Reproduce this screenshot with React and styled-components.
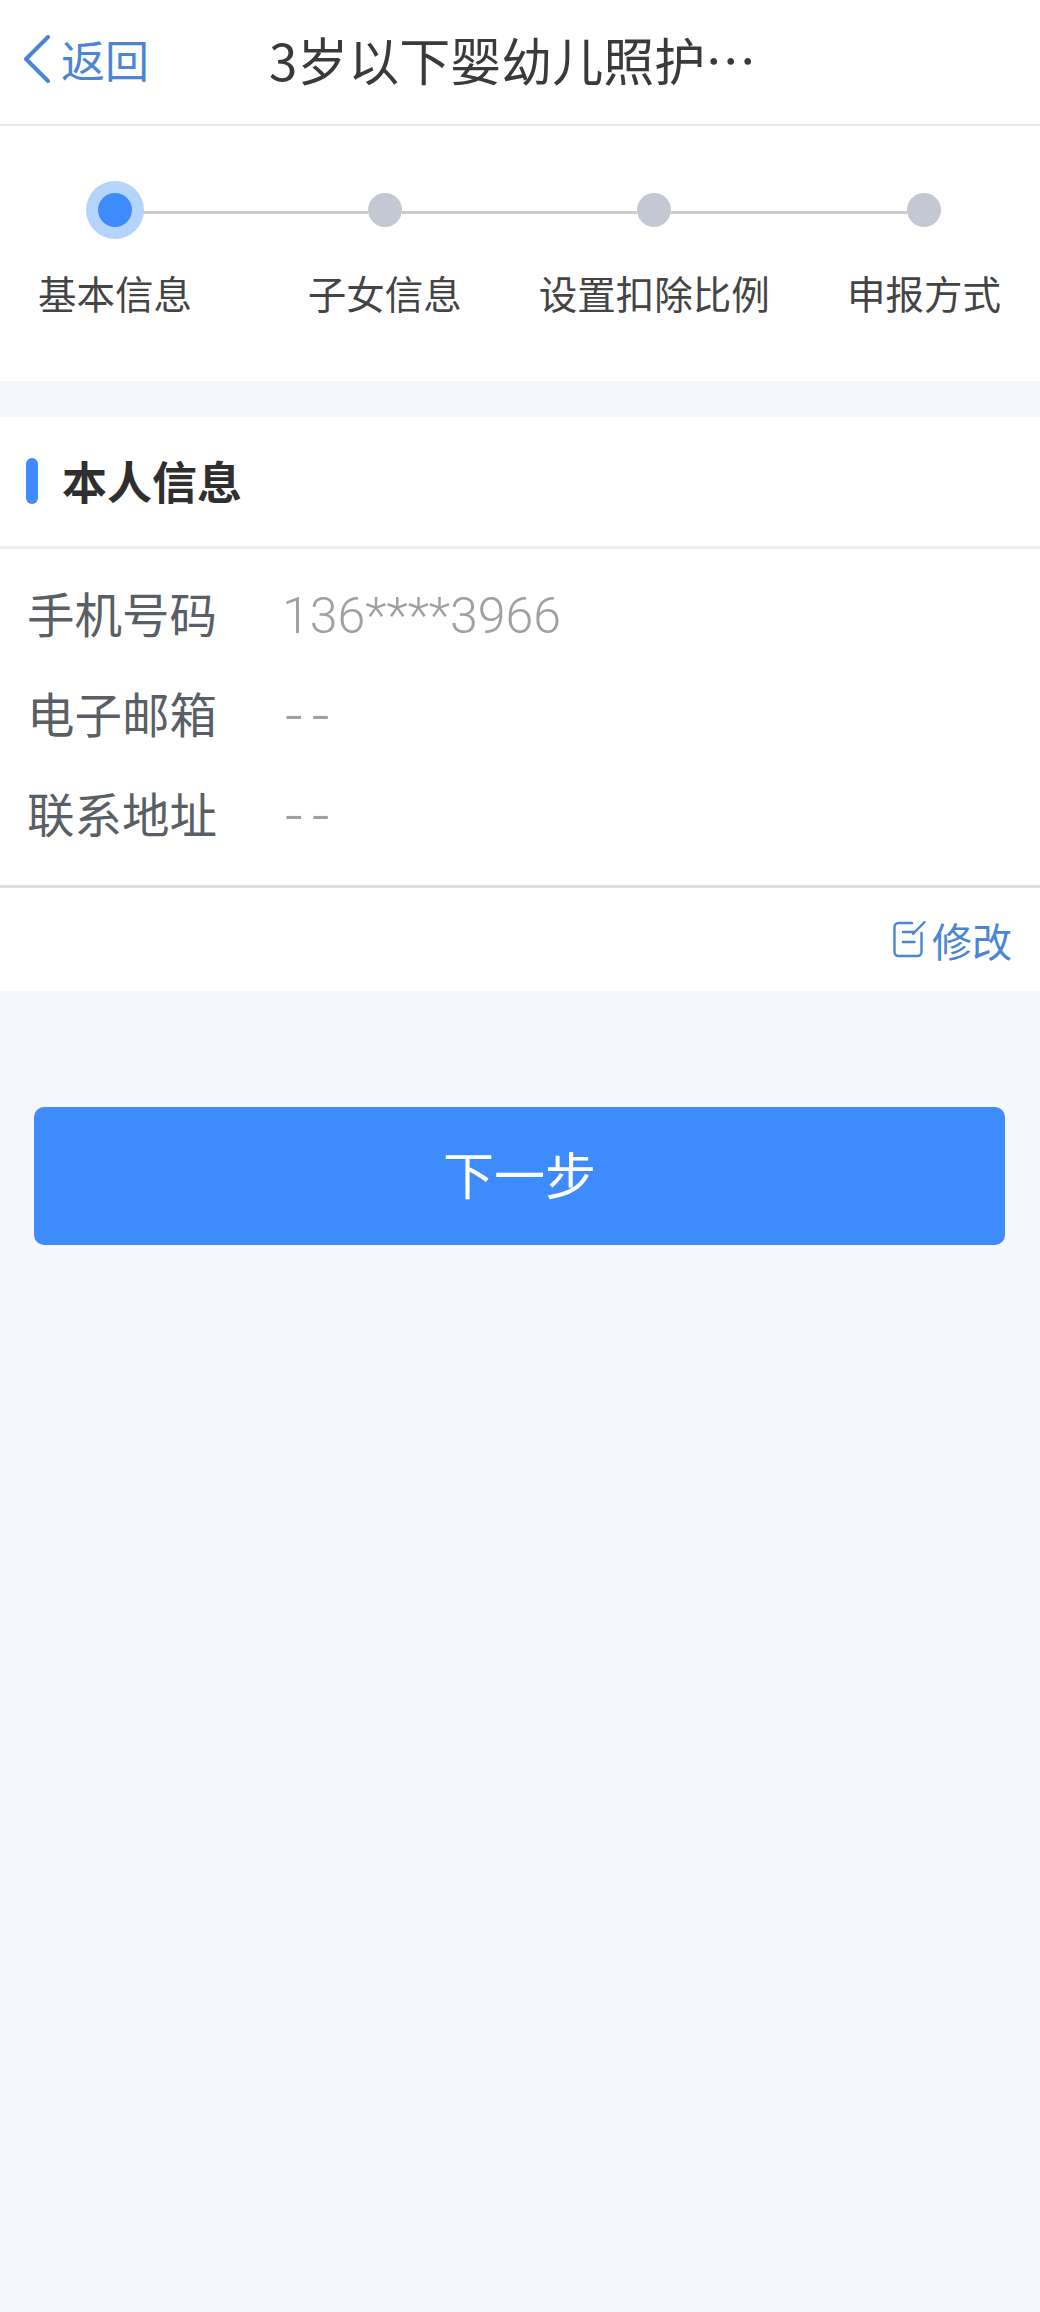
import React from 'react';
import styled, { createGlobalStyle } from 'styled-components';

const GlobalStyle = createGlobalStyle`
  html, body {
    margin: 0;
    padding: 0;
    background: #f4f7fb;
  }
  body {
    font-family: "Noto Sans CJK SC", "Noto Sans", sans-serif;
  }
  * {
    box-sizing: border-box;
  }
`;

const Page = styled.div`
  width: 1040px;
  min-height: 2312px;
  background: #f4f7fb;
`;

const Header = styled.header`
  height: 126px;
  background: #fff;
  border-bottom: 2px solid #e8e8e8;
  display: flex;
  align-items: center;
  padding: 0 0 6px 24px;
`;

const Back = styled.div`
  display: flex;
  align-items: center;
  width: 245px;
  color: #4a86d4;
  font-size: 44px;
  line-height: 1;
  gap: 11px;
`;

const Title = styled.h1`
  margin: 0;
  font-size: 51px;
  font-weight: 400;
  line-height: 1;
  color: #3a3a3c;
  white-space: nowrap;
`;

const StepSection = styled.section`
  height: 255px;
  background: #fff;
  padding-top: 55px;
`;

const Track = styled.div`
  display: flex;
  align-items: center;
  height: 58px;
  padding: 0 99px 0 98px;
`;

const Dot = styled.span`
  position: relative;
  z-index: 1;
  flex: none;
  width: 34px;
  height: 34px;
  border-radius: 50%;
  background: ${p => (p.$active ? '#3d8bfd' : '#c4c8d4')};
  ${p => p.$active && 'box-shadow: 0 0 0 12px #b5d4fb;'}
`;

const Line = styled.span`
  flex: 1;
  height: 3px;
  margin-top: 4px;
  background: #cccccc;
`;

const Labels = styled.div`
  display: flex;
  justify-content: space-between;
  padding-right: 1px;
  margin-top: 31px;
`;

const Label = styled.div`
  display: flex;
  justify-content: center;
  width: 230px;
  font-size: 38.5px;
  line-height: 44px;
  white-space: nowrap;
  color: #444;
`;

const Card = styled.section`
  margin-top: 36px;
  background: #fff;
`;

const CardHead = styled.div`
  height: 132px;
  border-bottom: 3px solid #eeeeee;
  display: flex;
  align-items: center;
  padding: 0 0 2px 26px;
  gap: 24px;
`;

const Mark = styled.span`
  width: 12px;
  height: 46px;
  border-radius: 6px;
  background: #3d8bfd;
`;

const CardTitle = styled.h2`
  margin: 0;
  font-size: 45px;
  font-weight: 700;
  line-height: 1;
  color: #2f2f2f;
`;

const Rows = styled.div`
  height: 339px;
  padding-top: 17px;
  border-bottom: 3px solid #dddddd;
`;

const Row = styled.div`
  height: 100px;
  display: flex;
  align-items: center;
`;

const RowLabel = styled.div`
  width: 282px;
  padding: 0 0 6px 27px;
  font-size: 47.5px;
  line-height: 1;
  color: #5a5f66;
`;

const RowValue = styled.div`
  font-family: Roboto, "Noto Sans", sans-serif;
  font-size: ${p => (p.$empty ? '62px' : '50px')};
  font-weight: 300;
  line-height: 1;
  color: #a0a0a0;
  ${p => p.$empty && 'padding-left: 3px; letter-spacing: 9px;'}
`;

const CardFoot = styled.div`
  height: 103px;
  display: flex;
  align-items: center;
  justify-content: flex-end;
  padding: 0 28px 0 0;
  gap: 6px;
  color: #4a86d4;
  font-size: 40px;
  line-height: 1;
`;

const NextButton = styled.button`
  display: block;
  width: 971px;
  height: 138px;
  margin: 116px 0 0 34px;
  padding: 0 0 6px;
  border: 0;
  border-radius: 10px;
  background: #3d8bfd;
  color: #fff;
  font-family: inherit;
  font-size: 51px;
`;

const BackIcon = () => (
  <svg width="26" height="48" viewBox="0 0 26 48" fill="none" stroke="#4a86d4" strokeWidth="4" strokeLinecap="round" strokeLinejoin="round">
    <path d="M24 2 2 24l22 22" />
  </svg>
);

const EditIcon = () => (
  <svg width="33" height="38" viewBox="0 0 33 38" fill="none" stroke="#4a86d4" strokeWidth="2.4" strokeLinecap="round">
    <path d="M19 2H5.5a4 4 0 0 0-4 4v25a4 4 0 0 0 4 4h19a4 4 0 0 0 4-4V12" />
    <path d="M20 13 31.5 1M10 11h11.5M10 21h11.5" />
  </svg>
);

const steps = ['基本信息', '子女信息', '设置扣除比例', '申报方式'];

const rows = [
  { label: '手机号码', value: '136****3966' },
  { label: '电子邮箱', value: '--', empty: true },
  { label: '联系地址', value: '--', empty: true },
];

export default function App() {
  return (
    <Page>
      <GlobalStyle />
      <Header>
        <Back>
          <BackIcon />
          返回
        </Back>
        <Title>3岁以下婴幼儿照护…</Title>
      </Header>
      <StepSection>
        <Track>
          <Dot $active />
          <Line />
          <Dot />
          <Line />
          <Dot />
          <Line />
          <Dot />
        </Track>
        <Labels>
          {steps.map(s => (
            <Label key={s}>{s}</Label>
          ))}
        </Labels>
      </StepSection>
      <Card>
        <CardHead>
          <Mark />
          <CardTitle>本人信息</CardTitle>
        </CardHead>
        <Rows>
          {rows.map(r => (
            <Row key={r.label}>
              <RowLabel>{r.label}</RowLabel>
              <RowValue $empty={r.empty}>{r.value}</RowValue>
            </Row>
          ))}
        </Rows>
        <CardFoot>
          <EditIcon />
          修改
        </CardFoot>
      </Card>
      <NextButton>下一步</NextButton>
    </Page>
  );
}
